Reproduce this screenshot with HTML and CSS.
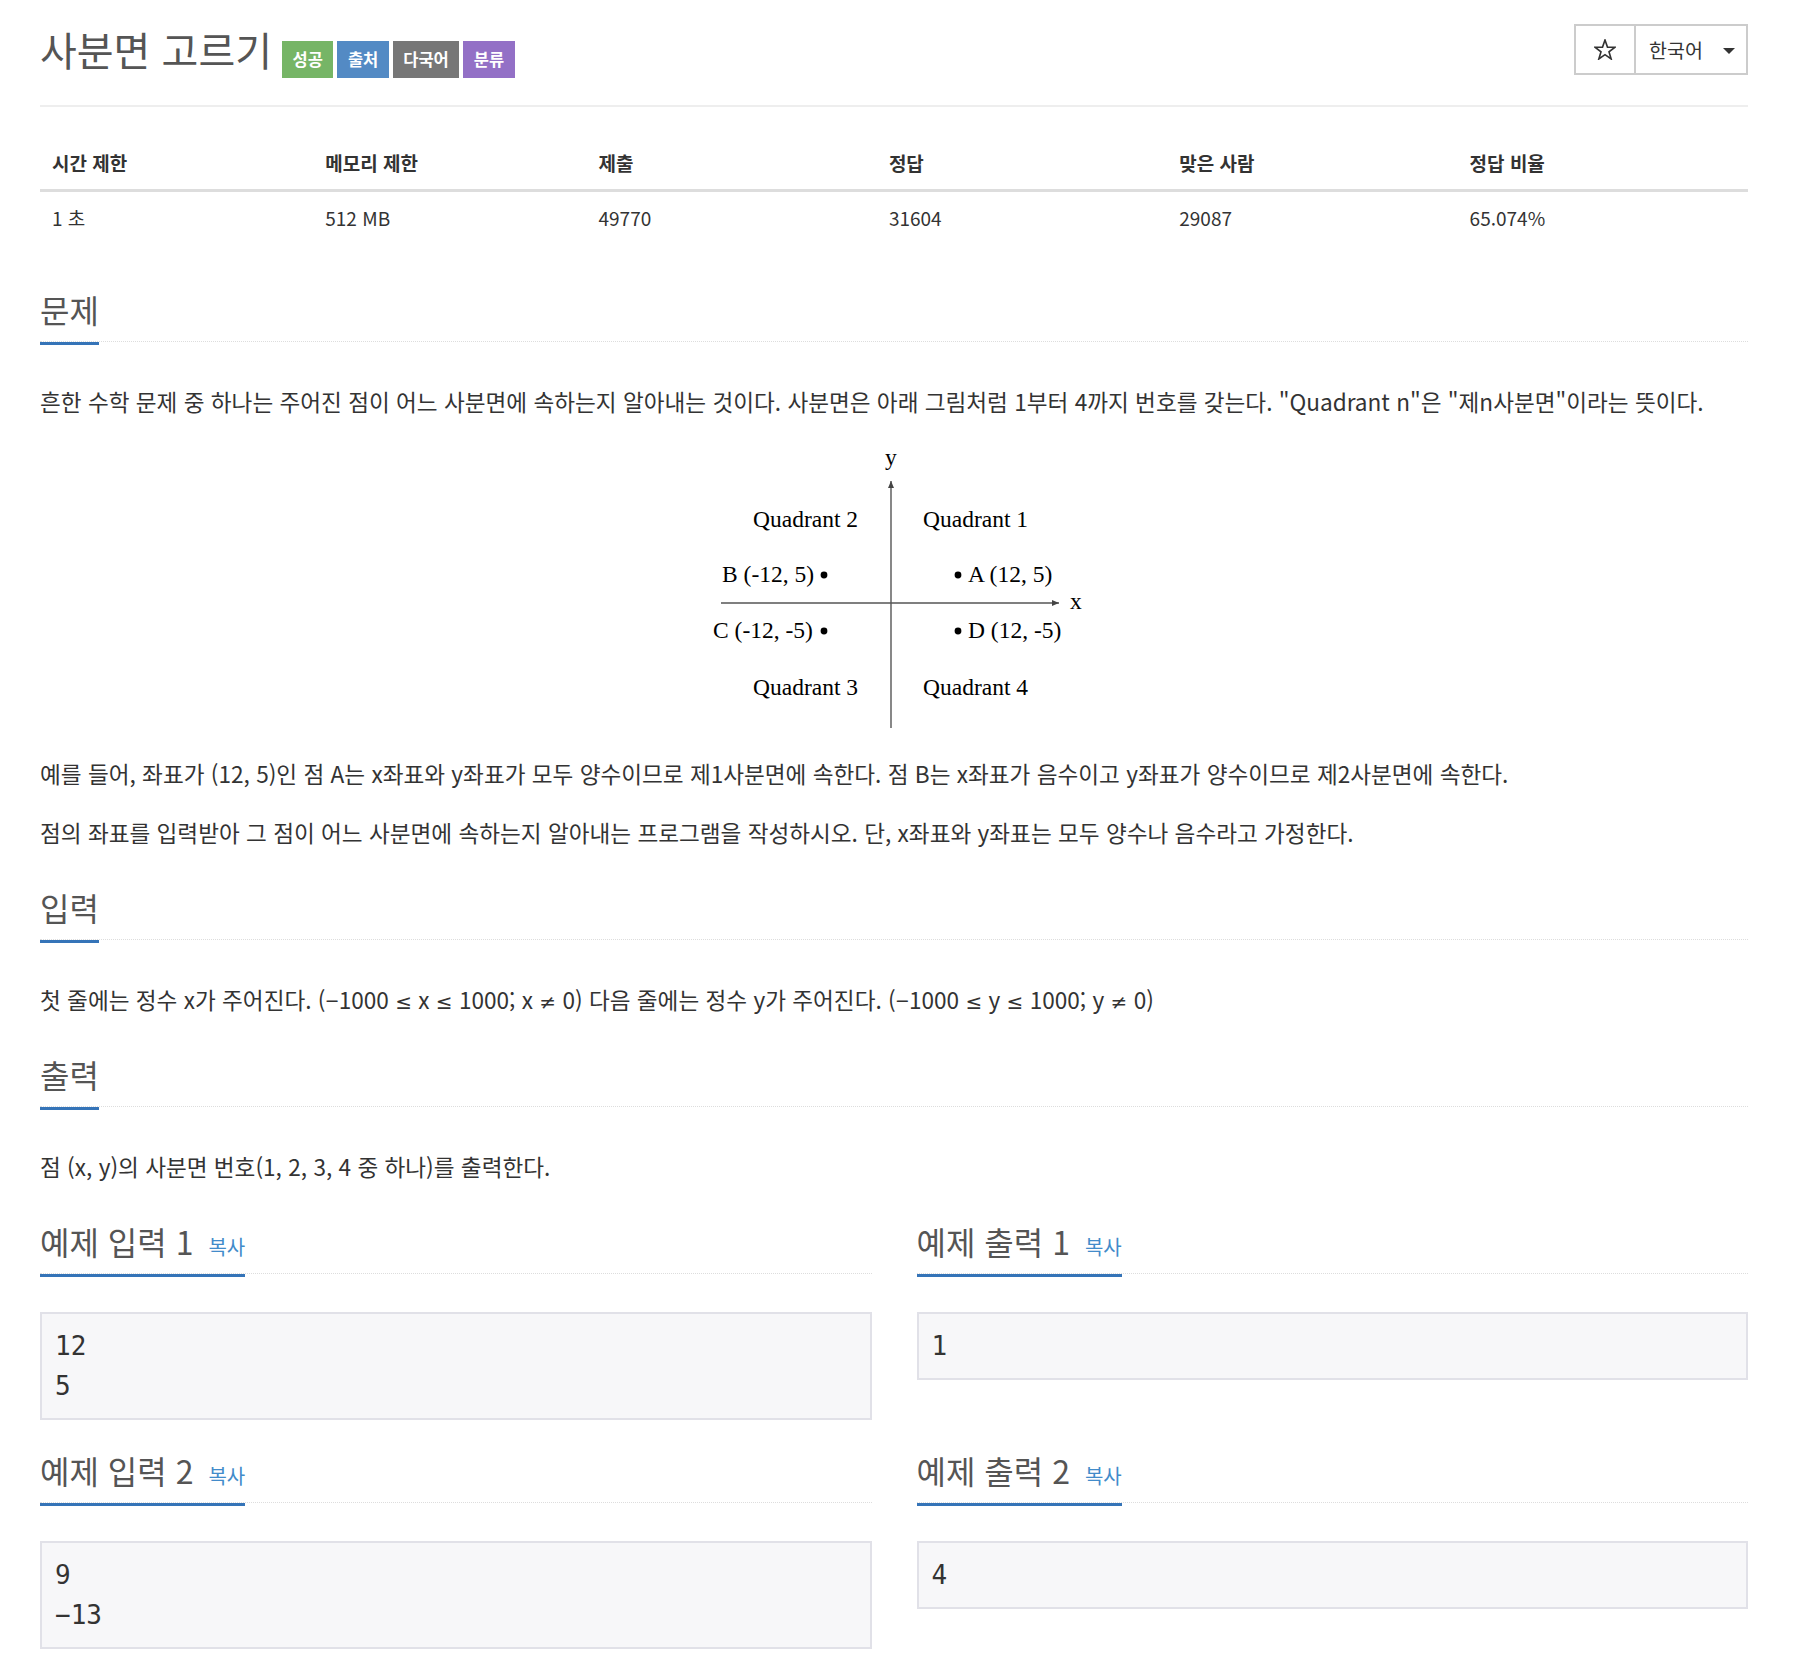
FILE: index.html
```html
<!DOCTYPE html>
<html lang="ko">
<head>
<meta charset="utf-8">
<title>사분면 고르기</title>
<link rel="stylesheet" href="styles.css">
</head>
<body>
<div class="page">
  <header class="page-header">
    <div class="title-group">
      <h1 class="title">사분면 고르기</h1>
      <div class="labels">
        <span class="label label-success">성공</span>
        <span class="label label-source">출처</span>
        <span class="label label-multi">다국어</span>
        <span class="label label-tag">분류</span>
      </div>
    </div>
    <div class="btn-group">
      <button class="btn btn-star" type="button">
        <svg class="star" width="22" height="21" viewBox="0 0 22 21"><polygon points="11,1 13.47,8.1 20.99,8.26 14.99,12.8 17.17,19.99 11,15.7 4.83,19.99 7.01,12.8 1.01,8.26 8.53,8.1" fill="none" stroke="#333" stroke-width="1.6" stroke-linejoin="miter"/></svg>
      </button>
      <button class="btn btn-lang" type="button"><span class="lang-text">한국어</span><span class="caret"></span></button>
    </div>
  </header>

  <table class="info">
    <thead>
      <tr><th class="w16">시간 제한</th><th class="w16">메모리 제한</th><th class="w17">제출</th><th class="w17">정답</th><th class="w17">맞은 사람</th><th class="w17">정답 비율</th></tr>
    </thead>
    <tbody>
      <tr><td>1 초</td><td>512 MB</td><td>49770</td><td>31604</td><td>29087</td><td>65.074%</td></tr>
    </tbody>
  </table>

  <section class="section">
    <div class="headline"><h2>문제</h2></div>
    <div class="problem-text">
      <p>흔한 수학 문제 중 하나는 주어진 점이 어느 사분면에 속하는지 알아내는 것이다. 사분면은 아래 그림처럼 1부터 4까지 번호를 갖는다. "Quadrant n"은 "제n사분면"이라는 뜻이다.</p>
      <div class="figure">
        <svg class="diagram" width="380" height="295" viewBox="0 0 380 295">
          <defs>
            <marker id="arr" markerWidth="8" markerHeight="6" refX="7" refY="3" orient="auto" markerUnits="userSpaceOnUse">
              <path d="M0,0 L7,3 L0,6 Z" fill="#444"/>
            </marker>
          </defs>
          <line x1="185" y1="285" x2="185" y2="38" stroke="#555" stroke-width="1.4" marker-end="url(#arr)"/>
          <line x1="15" y1="160" x2="353" y2="160" stroke="#555" stroke-width="1.4" marker-end="url(#arr)"/>
          <g class="dtext">
            <text x="179" y="22">y</text>
            <text x="364" y="166">x</text>
            <text x="47" y="84">Quadrant 2</text>
            <text x="217" y="84">Quadrant 1</text>
            <text x="16" y="139">B (-12, 5)</text>
            <text x="262" y="139">A (12, 5)</text>
            <text x="7" y="195">C (-12, -5)</text>
            <text x="262" y="195">D (12, -5)</text>
            <text x="47" y="252">Quadrant 3</text>
            <text x="217" y="252">Quadrant 4</text>
          </g>
          <circle cx="118" cy="132" r="3.4" fill="#000"/>
          <circle cx="252" cy="132" r="3.4" fill="#000"/>
          <circle cx="118" cy="188" r="3.4" fill="#000"/>
          <circle cx="252" cy="188" r="3.4" fill="#000"/>
        </svg>
      </div>
      <p>예를 들어, 좌표가 (12, 5)인 점 A는 x좌표와 y좌표가 모두 양수이므로 제1사분면에 속한다. 점 B는 x좌표가 음수이고 y좌표가 양수이므로 제2사분면에 속한다.</p>
      <p>점의 좌표를 입력받아 그 점이 어느 사분면에 속하는지 알아내는 프로그램을 작성하시오. 단, x좌표와 y좌표는 모두 양수나 음수라고 가정한다.</p>
    </div>
  </section>

  <section class="section">
    <div class="headline"><h2>입력</h2></div>
    <div class="problem-text">
      <p>첫 줄에는 정수 x가 주어진다. (<span class="sym">−</span>1000 <span class="rel">≤</span> x <span class="rel">≤</span> 1000; x <span class="rel">≠</span> 0) 다음 줄에는 정수 y가 주어진다. (<span class="sym">−</span>1000 <span class="rel">≤</span> y <span class="rel">≤</span> 1000; y <span class="rel">≠</span> 0)</p>
    </div>
  </section>

  <section class="section">
    <div class="headline"><h2>출력</h2></div>
    <div class="problem-text">
      <p>점 (x, y)의 사분면 번호(1, 2, 3, 4 중 하나)를 출력한다.</p>
    </div>
  </section>

  <div class="samples">
    <section class="sample">
      <div class="headline"><h2>예제 입력 1 <span class="copy">복사</span></h2></div>
      <pre class="sampledata">12
5</pre>
    </section>
    <section class="sample">
      <div class="headline"><h2>예제 출력 1 <span class="copy">복사</span></h2></div>
      <pre class="sampledata">1</pre>
    </section>
    <section class="sample">
      <div class="headline"><h2>예제 입력 2 <span class="copy">복사</span></h2></div>
      <pre class="sampledata">9
−13</pre>
    </section>
    <section class="sample">
      <div class="headline"><h2>예제 출력 2 <span class="copy">복사</span></h2></div>
      <pre class="sampledata">4</pre>
    </section>
  </div>
</div>
</body>
</html>
```

FILE: styles.css
```css
html, body {
  margin: 0;
  padding: 0;
  background: #fff;
}
body {
  font-family: "Noto Sans CJK KR", "Noto Sans", sans-serif;
  color: #333;
}
.page {
  width: 1708px;
  margin-left: 40px;
}

/* header */
.page-header {
  display: flex;
  align-items: flex-start;
  justify-content: space-between;
  padding-top: 24px;
  padding-bottom: 27px;
  border-bottom: 2px solid #eee;
}
.title-group {
  display: flex;
  align-items: baseline;
  margin-top: 2px;
}
.title {
  margin: 0;
  font-size: 40px;
  line-height: 46px;
  font-weight: 400;
  color: #555;
}
.labels {
  display: flex;
  align-items: baseline;
  gap: 4px;
  margin-left: 10px;
}
.label {
  display: block;
  height: 37px;
  line-height: 37px;
  padding: 0 10.5px;
  font-size: 16.5px;
  font-weight: 700;
  color: #fff;
}
.label-success { background: #76b566; }
.label-source { background: #538ac4; }
.label-multi { background: #777; }
.label-tag { background: #9370c6; }

.btn-group {
  display: flex;
}
.btn {
  box-sizing: border-box;
  height: 51px;
  border: 2px solid #ccc;
  background: #fff;
  margin: 0;
  font-family: inherit;
  color: #333;
  display: flex;
  align-items: center;
  cursor: pointer;
}
.btn + .btn {
  margin-left: -2px;
}
.btn-star {
  width: 62px;
  justify-content: center;
  padding: 0 0 1px 0;
}
.star {
  display: block;
}
.btn-lang {
  width: 114px;
  padding: 0 11px 0 13px;
  font-size: 19.5px;
}
.lang-text {
  line-height: 1;
}
.caret {
  margin-left: auto;
  width: 0;
  height: 0;
  border-top: 6px solid #333;
  border-left: 6px solid transparent;
  border-right: 6px solid transparent;
  margin-top: 3px;
}

/* info table */
.info {
  width: 100%;
  border-collapse: collapse;
  margin-top: 30px;
  margin-bottom: 48px;
  font-size: 19px;
  line-height: 28px;
}
.info th, .info td {
  padding: 12px;
  text-align: left;
}
.info th {
  font-weight: 700;
  border-bottom: 3px solid #ddd;
}
.w16 { width: 16%; }
.w17 { width: 17%; }

/* sections */
.section {
  margin-top: 35px;
}
.headline {
  display: flex;
  border-bottom: 1px dotted #ddd;
  margin-bottom: 38px;
}
.headline h2 {
  margin: 0 0 -4px 0;
  padding-bottom: 16px;
  border-bottom: 3px solid #3574b8;
  font-size: 32px;
  line-height: 34px;
  font-weight: 400;
  color: #555;
}
.problem-text p {
  margin: 0 0 15px 0;
  font-size: 22.6px;
  line-height: 44px;
}
.sym {
  font-family: "Liberation Sans", sans-serif;
  line-height: 1;
}
.rel {
  font-family: "DejaVu Sans", sans-serif;
  font-size: 20px;
  line-height: 1;
}
.figure {
  margin: 19px 0 14px 0;
  display: flex;
  justify-content: center;
}
.diagram {
  display: block;
  margin-left: 3px;
}
.dtext text {
  font-family: "Liberation Serif", "Times New Roman", serif;
  font-size: 23.5px;
  fill: #000;
}

/* samples */
.samples {
  display: grid;
  grid-template-columns: 1fr 1fr;
  column-gap: 45px;
  row-gap: 33px;
  margin-top: 35px;
}
.copy {
  font-size: 20px;
  line-height: 1;
  color: #428bca;
  margin-left: 6px;
}
.sampledata {
  margin: 0;
  padding: 12px 13px;
  background: #f7f7f9;
  border: 2px solid #e1e1e8;
  font-family: "DejaVu Sans Mono", "Liberation Mono", monospace;
  font-size: 26px;
  line-height: 40px;
  color: #333;
}
```
